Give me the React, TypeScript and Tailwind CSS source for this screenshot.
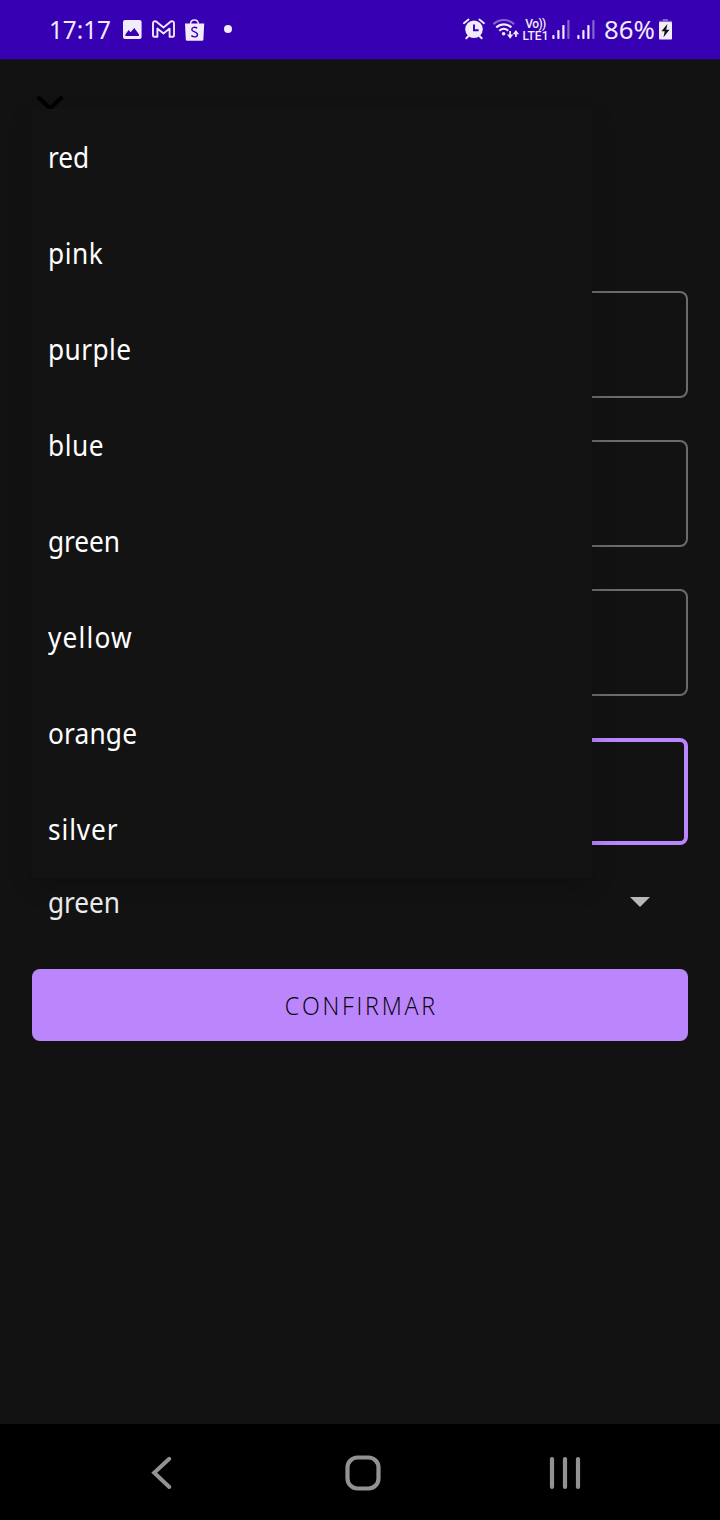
const colors = [
  { name: "red", tracking: "tracking-[-0.1px]" },
  { name: "pink", tracking: "tracking-[0.6px]" },
  { name: "purple", tracking: "tracking-[0.45px]" },
  { name: "blue", tracking: "tracking-[0.6px]" },
  { name: "green", tracking: "tracking-[-0.1px]" },
  { name: "yellow", tracking: "tracking-[1.3px]" },
  { name: "orange", tracking: "tracking-[0.2px]" },
  { name: "silver", tracking: "tracking-[1px]" },
];

const labelClass =
  "inline-block origin-left scale-x-[0.905] text-[29px] leading-[40px] whitespace-nowrap";

function ImageIcon() {
  return (
    <svg className="ml-[12px] h-[59px] w-[20px] shrink-0" viewBox="122 0 20 59">
      <rect x="123" y="20" width="18.6" height="19" rx="2" fill="#f1ebfb" />
      <path d="M125.4 36v-1.6l3.2-4.4 2 2.2 3.7-4.2 4.6 6.2v1.8z" fill="#3700b3" />
    </svg>
  );
}

function MailIcon() {
  return (
    <svg className="ml-[9px] h-[59px] w-[25px] shrink-0" viewBox="151 0 25 59" fill="none">
      <path
        d="M153 23.2c0-1.8 2.2-2.6 3.5-1.5l7 5.8 7-5.8c1.3-1.1 3.5-.3 3.5 1.5v12.2c0 .8-.5 1.4-1.3 1.4h-3.1v-8.2l-6.1 5-6.1-5v8.2h-3.1c-.8 0-1.3-.6-1.3-1.4z"
        stroke="#efe8fb"
        strokeWidth="1.9"
        strokeLinejoin="round"
      />
    </svg>
  );
}

function BagIcon() {
  return (
    <svg className="ml-[8px] h-[59px] w-[21px] shrink-0" viewBox="184 0 21 59">
      <path d="M190.4 24.5c0-6 8-6 8 0" fill="none" stroke="#efe8fb" strokeWidth="1.4" />
      <path d="M185 23.6h19.2l-.8 15.8q-.1 1.3-1.4 1.3h-14.8q-1.3 0-1.4-1.3z" fill="#f1ebfb" />
      <path
        d="M197.2 28.2c-2.2-1.6-5.4-1.1-5.4 1.3 0 2.9 5.7 2 5.7 5 0 2.8-3.6 3-6.2 1.2"
        fill="none"
        stroke="#3700b3"
        strokeWidth="1.4"
      />
    </svg>
  );
}

function AlarmIcon() {
  return (
    <svg className="h-[59px] w-[24px] shrink-0" viewBox="462 0 24 59" fill="none" stroke="#f1ebfb">
      <circle cx="474" cy="29.3" r="8.8" fill="#f1ebfb" stroke="none" />
      <path d="M463.9 23.2l4.6-3.7M484 23.2l-4.6-3.7" strokeWidth="1.9" strokeLinecap="round" />
      <path d="M468.5 36l-2.2 2.2M479.5 36l2.2 2.2" strokeWidth="2" strokeLinecap="round" />
      <path d="M474 24.5v5.8h4.6" stroke="#3700b3" strokeWidth="1.9" />
    </svg>
  );
}

function WifiIcon() {
  return (
    <svg className="ml-[7px] h-[59px] w-[27px] shrink-0" viewBox="493.5 0 27 59" fill="none">
      <path d="M494 24.1c6-5.5 14.5-5.5 20.6 0" stroke="#8763d0" strokeWidth="2.2" />
      <path d="M496.7 27.4c4.5-4 10.7-4 15.2 0" stroke="#f1ebfb" strokeWidth="2.1" />
      <path d="M499.8 30.7c2.8-2.4 6.2-2.4 9 0" stroke="#f1ebfb" strokeWidth="2.1" />
      <circle cx="504.1" cy="33.8" r="1.8" fill="#f1ebfb" />
      <path d="M510.6 31v4.5M516.4 37v-4.5" stroke="#f1ebfb" strokeWidth="1.7" />
      <path d="M507.4 34.5h6.4l-3.2 4.2zM513.2 34.3h6.4l-3.2-4.2z" fill="#f1ebfb" />
    </svg>
  );
}

function SignalIcon() {
  return (
    <svg className="h-[59px] w-[18px] shrink-0" viewBox="0 0 18 59">
      <rect x="0.3" y="35" width="2.2" height="4" rx="0.7" fill="#f1ebfb" />
      <rect x="5.3" y="30" width="2.2" height="9" rx="0.7" fill="#f1ebfb" />
      <rect x="10.3" y="25" width="2.2" height="14" rx="0.7" fill="#f1ebfb" />
      <rect x="15.3" y="20" width="2.2" height="19" rx="0.7" fill="#8763d0" />
    </svg>
  );
}

function BatteryIcon() {
  return (
    <svg className="ml-[3px] h-[59px] w-[14px] shrink-0" viewBox="659 0 14 59">
      <path d="M659 22.2v-1.4h3.7V19h5.2v1.8h4v1.4z" fill="#8763d0" />
      <rect x="659" y="22" width="13" height="17.5" rx="0.8" fill="#f1ebfb" />
      <path d="M667.4 24l-6 7.3h3.3l-1.2 6 6-7.6h-3.3z" fill="#111" />
    </svg>
  );
}

function StatusBar() {
  return (
    <header className="flex h-[60px] items-center border-b border-[#1c0a44] bg-[#3700b3] text-[#f1ebfb]">
      <span className="ml-[49px] w-[61px] whitespace-nowrap text-[25.5px] leading-[59px]">
        <span className="inline-block origin-left scale-x-[0.95]">17:17</span>
      </span>
      <ImageIcon />
      <MailIcon />
      <BagIcon />
      <span className="mb-px ml-[19px] size-2 rounded-full bg-[#f1ebfb]" />
      <div className="ml-auto mr-[47px] flex items-center">
        <AlarmIcon />
        <WifiIcon />
        <div className="ml-[2px] flex w-[27px] flex-col items-center whitespace-nowrap font-['Roboto','Noto_Sans',sans-serif] text-[12px] font-medium leading-[12px]">
          <span className="tracking-[-0.6px]">Vo))</span>
          <span>LTE1</span>
        </div>
        <div className="ml-[3px] flex gap-[7px]">
          <SignalIcon />
          <SignalIcon />
        </div>
        <span className="ml-[9px] w-[52px] whitespace-nowrap text-[26px] leading-[59px]">
          <span className="inline-block origin-left scale-x-[0.99]">86%</span>
        </span>
        <BatteryIcon />
      </div>
    </header>
  );
}

function ColorMenu() {
  return (
    <ul className="absolute left-[32px] top-[109px] w-[560px] rounded-[4px] bg-[#131313] pb-px text-white shadow-[0_8px_24px_rgba(0,0,0,0.2)]">
      {colors.map((color) => (
        <li key={color.name} className="flex h-24 items-center pl-4">
          <span className={`${labelClass} ${color.tracking}`}>{color.name}</span>
        </li>
      ))}
    </ul>
  );
}

function NavigationBar() {
  return (
    <nav className="flex h-24 items-center bg-black">
      <svg className="ml-[148px] h-10 w-7" viewBox="0 0 28 40" fill="none">
        <path d="M21.3 6.8L6.2 20.8 21.3 35" stroke="#929292" strokeWidth="4" strokeLinecap="round" />
      </svg>
      <svg className="ml-[167px] h-10 w-10" viewBox="0 0 40 40" fill="none">
        <rect x="4.5" y="5.5" width="31" height="31" rx="10" stroke="#929292" strokeWidth="4.2" />
      </svg>
      <svg className="ml-[163px] h-10 w-10" viewBox="0 0 40 40" fill="none">
        <path d="M6 7v28M19 7v28M32 7v28" stroke="#929292" strokeWidth="4.2" strokeLinecap="round" />
      </svg>
    </nav>
  );
}

export default function App() {
  return (
    <div className="relative flex h-[1520px] w-[720px] flex-col overflow-hidden bg-[#121212] font-['Noto_Sans',sans-serif]">
      <StatusBar />
      <main className="flex flex-1 flex-col px-8">
        <svg className="mt-[32px] h-9 w-9" viewBox="0 0 36 36" fill="none">
          <path d="M7 6l11 10.5 11-10.5" stroke="#000" strokeWidth="4" strokeLinecap="round" />
        </svg>
        <div className="mt-[163px] flex flex-col gap-[42px]">
          <div className="h-[107px] rounded-[8px] border-2 border-[#6b6b6b]" />
          <div className="h-[107px] rounded-[8px] border-2 border-[#6b6b6b]" />
          <div className="h-[107px] rounded-[8px] border-2 border-[#6b6b6b]" />
          <div className="h-[107px] rounded-[8px] border-4 border-[#bb86fc]" />
        </div>
        <div className="mt-[33px] flex h-12 items-center justify-between pl-4 pr-[38px] text-[#ececec]">
          <span className={`${labelClass} tracking-[-0.1px]`}>green</span>
          <svg className="h-[10px] w-5" viewBox="0 0 20 10">
            <path d="M0 0h20L10 10z" fill="#b8b8b8" />
          </svg>
        </div>
        <button className="mt-[43px] flex h-[72px] items-center justify-center rounded-[8px] bg-[#bb86fc] pt-[2px] font-['Open_Sans','Noto_Sans',sans-serif] text-[25px] font-light text-black">
          <span className="inline-block scale-x-[0.93] pl-[3px] tracking-[3px]">CONFIRMAR</span>
        </button>
      </main>
      <NavigationBar />
      <ColorMenu />
    </div>
  );
}
